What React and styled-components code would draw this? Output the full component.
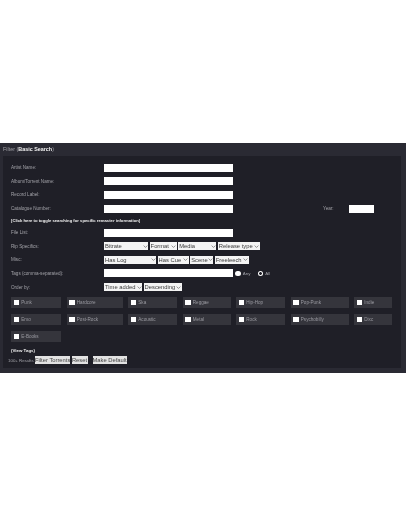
import React from "react";
import styled, { createGlobalStyle } from "styled-components";

const Global = createGlobalStyle`
  html, body {
    margin: 0;
    background: #fff;
    font-family: "Liberation Sans", Arial, sans-serif;
  }
`;

const chevron = encodeURIComponent(
  '<svg xmlns="http://www.w3.org/2000/svg" viewBox="0 0 8 8"><path d="M1 2.5l3 3 3-3" fill="none" stroke="#555" stroke-width="1"/></svg>'
);

const Page = styled.div`
  width: 406px;
  height: 516px;
  padding-top: 143px;
  box-sizing: border-box;
  overflow: hidden;
`;

const Panel = styled.div`
  height: 230px;
  background: #2a2a33;
  padding: 0 5px 0 3px;
  box-sizing: border-box;
  filter: blur(0.3px);
`;

const Title = styled.div`
  height: 13px;
  line-height: 13px;
  font-size: 5.4px;
  color: #a0a0a6;
  b {
    color: #f2f2f2;
  }
`;

const Body = styled.div`
  height: 212px;
  background: #1f1f27;
  padding: 5px 8px 0;
  box-sizing: border-box;
`;

const Row = styled.div`
  display: flex;
  align-items: center;
  height: ${(p) => p.$h || 13.6}px;
  font-size: 4.6px;
  color: #a2a2a8;
`;

const Label = styled.div`
  width: 93px;
  flex: none;
`;

const TextInput = styled.input`
  width: ${(p) => p.$w}px;
  height: 8px;
  box-sizing: border-box;
  border: 0;
  padding: 0;
  background: #fff;
  flex: none;
`;

const YearLabel = styled.div`
  margin-left: 90px;
  width: 26px;
`;

const Toggle = styled.div`
  font-weight: 700;
  color: #f0f0f0;
  font-size: 4.2px;
`;

const Selects = styled.div`
  display: flex;
  gap: 1.6px;
`;

const Select = styled.select`
  appearance: none;
  width: ${(p) => p.$w}px;
  height: 8px;
  font-size: 5.8px;
  font-family: "Liberation Sans", Arial, sans-serif;
  padding: 0 0 0 1px;
  border: 0;
  border-radius: 0;
  background: #f4f4f4 url("data:image/svg+xml,${chevron}") no-repeat right 0.5px center / 5px 5px;
  color: #3a3a3a;
  flex: none;
`;

const Radio = styled.input.attrs({ type: "radio", name: "tags" })`
  appearance: none;
  width: 5.4px;
  height: 5.4px;
  margin: 0 2px 0 2.4px;
  border-radius: 50%;
  background: #fff;
  flex: none;
  &:checked {
    background: radial-gradient(circle, #1f1f27 0 1.3px, #fff 1.5px);
  }
`;

const RadioText = styled.span`
  margin-right: 5px;
  font-size: 4.4px;
`;

const TagGrid = styled.div`
  display: grid;
  grid-template-columns: 50px 56px 49px 48px 49px 58px 38px;
  column-gap: 5.5px;
  row-gap: 5.6px;
  margin-top: 3px;
`;

const Tag = styled.label`
  display: flex;
  align-items: center;
  height: 11.4px;
  padding-left: 2.5px;
  background: #35353c;
  font-size: 4.6px;
  color: #9a9aa1;
`;

const Box = styled.input.attrs({ type: "checkbox" })`
  appearance: none;
  width: 5.6px;
  height: 5.6px;
  margin: 0 2.2px 0 0;
  background: #fff;
  flex: none;
`;

const ViewTags = styled.div`
  margin-top: 6px;
  font-size: 4.4px;
  font-weight: 700;
  color: #f0f0f0;
`;

const Actions = styled.div`
  display: flex;
  align-items: center;
  margin: 3px 0 0 -3px;
  font-size: 4.4px;
  color: #a2a2a8;
`;

const Results = styled.span`
  width: 27px;
  flex: none;
`;

const Button = styled.button`
  height: 7.6px;
  width: ${(p) => p.$w}px;
  margin-right: ${(p) => p.$mr || 0}px;
  border: 0;
  padding: 0;
  background: #e2e2e2;
  color: #444;
  font-family: "Liberation Sans", Arial, sans-serif;
  font-size: 5.8px;
  line-height: 7px;
  white-space: nowrap;
  flex: none;
`;

const tags = [
  "Punk", "Hardcore", "Ska", "Reggae", "Hip-Hop", "Pop-Punk", "Indie",
  "Emo", "Post-Rock", "Acoustic", "Metal", "Rock", "Psychobilly", "Dixc",
  "E-Books",
];

const Field = ({ label, w = 129, children }) => (
  <Row>
    <Label>{label}</Label>
    <TextInput $w={w} />
    {children}
  </Row>
);

const Picker = ({ w, children }) => (
  <Select $w={w}>
    <option>{children}</option>
  </Select>
);

export default function App() {
  return (
    <Page>
      <Global />
      <Panel>
        <Title>
          Filter (<b>Basic Search</b>)
        </Title>
        <Body>
          <Field label="Artist Name:" />
          <Field label="Album/Torrent Name:" />
          <Field label="Record Label:" />
          <Field label="Catalogue Number:">
            <YearLabel>Year:</YearLabel>
            <TextInput $w={25} />
          </Field>
          <Row $h={10.5}>
            <Toggle>[Click here to toggle searching for specific remaster information]</Toggle>
          </Row>
          <Field label="File List:" />
          <Row>
            <Label>Rip Specifics:</Label>
            <Selects>
              <Picker w={44}>Bitrate</Picker>
              <Picker w={27}>Format</Picker>
              <Picker w={38}>Media</Picker>
              <Picker w={42}>Release type</Picker>
            </Selects>
          </Row>
          <Row>
            <Label>Misc:</Label>
            <Selects>
              <Picker w={52}>Has Log</Picker>
              <Picker w={31}>Has Cue</Picker>
              <Picker w={23}>Scene</Picker>
              <Picker w={34}>Freeleech</Picker>
            </Selects>
          </Row>
          <Row>
            <Label>Tags (comma-separated):</Label>
            <TextInput $w={129} />
            <Radio />
            <RadioText>Any</RadioText>
            <Radio defaultChecked />
            <RadioText>All</RadioText>
          </Row>
          <Row>
            <Label>Order by:</Label>
            <Selects>
              <Picker w={38}>Time added</Picker>
              <Picker w={38}>Descending</Picker>
            </Selects>
          </Row>
          <TagGrid>
            {tags.map((t) => (
              <Tag key={t}>
                <Box />
                {t}
              </Tag>
            ))}
          </TagGrid>
          <ViewTags>(View Tags)</ViewTags>
          <Actions>
            <Results>100+ Results</Results>
            <Button $w={35} $mr={1.5}>Filter Torrents</Button>
            <Button $w={16} $mr={5}>Reset</Button>
            <Button $w={34}>Make Default</Button>
          </Actions>
        </Body>
      </Panel>
    </Page>
  );
}
